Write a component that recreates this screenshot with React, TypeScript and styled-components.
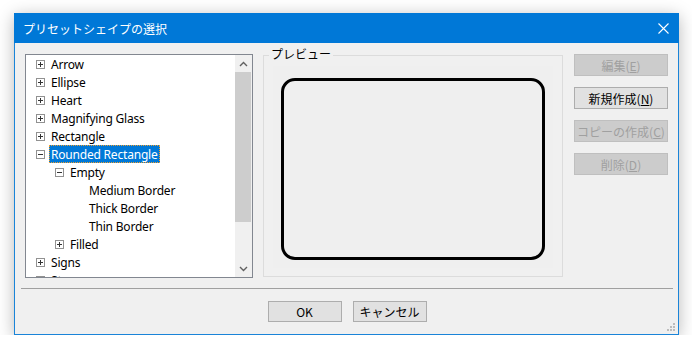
import styled, { createGlobalStyle } from "styled-components";

const GlobalStyle = createGlobalStyle`
	html, body {
		margin: 0;
		padding: 0;
		background: #ffffff;
	}
	body {
		font-family: "Noto Sans", "Noto Sans CJK JP", sans-serif;
	}
`;

const JP = `"Noto Sans CJK JP", "Noto Sans", sans-serif`;
const UI = `"Noto Sans", "Noto Sans CJK JP", sans-serif`;

const Window = styled.div`
	position: relative;
	margin: 13px 0 0 14px;
	width: 665px;
	height: 322px;
	box-sizing: border-box;
	border: 1px solid #1a84d8;
	background: #f0f0f0;
	box-shadow: 0 3px 16px rgba(0, 0, 0, 0.28);
	display: flex;
	flex-direction: column;
`;

const TitleBar = styled.div`
	height: 30px;
	margin: -1px -1px 0;
	background: #0078d7;
	display: flex;
	align-items: center;
	justify-content: space-between;
	padding: 0 0 0 9px;
	color: #ffffff;
	font-family: ${JP};
	font-size: 12px;
	flex-shrink: 0;
`;

const CloseBox = styled.div`
	width: 30px;
	height: 30px;
	display: flex;
	align-items: center;
	justify-content: center;
	margin-right: 1px;
`;

const Client = styled.div`
	flex: 1;
	display: flex;
	flex-direction: column;
`;

const MainRow = styled.div`
	display: flex;
	padding: 11px 0 0 10px;
`;

const Tree = styled.div`
	width: 228px;
	height: 224px;
	box-sizing: border-box;
	border: 1px solid #828790;
	background: #ffffff;
	display: flex;
	overflow: hidden;
`;

const TreeList = styled.div`
	flex: 1;
	overflow: hidden;
	font-family: ${UI};
	font-size: 12px;
	color: #000000;
`;

const Row = styled.div<{ $level: number }>`
	height: 18px;
	display: flex;
	align-items: center;
	padding-left: ${(p) => 10 + p.$level * 19}px;
	white-space: nowrap;
`;

const ExpSlot = styled.div`
	width: 9px;
	height: 9px;
	margin-right: 4px;
	flex-shrink: 0;
	display: flex;
`;

const Label = styled.span<{ $selected?: boolean }>`
	display: inline-block;
	height: 18px;
	line-height: 17px;
	padding: 1px 2px 0 2px;
	box-sizing: border-box;
	background: ${(p) => (p.$selected ? "#0078d7" : "transparent")};
	color: ${(p) => (p.$selected ? "#ffffff" : "#000000")};
	outline: ${(p) => (p.$selected ? "1px dotted #f0a030" : "none")};
	outline-offset: -1px;
	letter-spacing: -0.2px;
`;

const ScrollBar = styled.div`
	width: 17px;
	background: #f0f0f0;
	display: flex;
	flex-direction: column;
`;

const ScrollArrow = styled.div`
	height: 17px;
	display: flex;
	align-items: center;
	justify-content: center;
`;

const ScrollThumb = styled.div`
	height: 150px;
	margin: 0 1px 0 0;
	background: #cdcdcd;
`;

const ScrollTrack = styled.div`
	flex: 1;
`;

const Group = styled.div`
	position: relative;
	margin: 1px 0 0 10px;
	width: 300px;
	height: 222px;
	box-sizing: border-box;
	border: 1px solid #dcdcdc;
	padding: 10px 9px 8px 9px;
`;

const GroupLegend = styled.span`
	position: absolute;
	top: -10px;
	left: 5px;
	padding: 0 2px;
	background: #f0f0f0;
	font-family: ${JP};
	font-size: 12px;
	line-height: 16px;
	color: #000000;
`;

const Preview = styled.div`
	height: 100%;
	background: #efefef;
	display: flex;
	padding: 12px 8px 8px 8px;
	box-sizing: border-box;
`;

const Shape = styled.div`
	flex: 1;
	border: 3px solid #000000;
	border-radius: 14px;
`;

const SideButtons = styled.div`
	margin-left: 11px;
	display: flex;
	flex-direction: column;
	gap: 11px;
`;

const Button = styled.div<{ $disabled?: boolean; $w: number; $h: number }>`
	width: ${(p) => p.$w}px;
	height: ${(p) => p.$h}px;
	box-sizing: border-box;
	border: 1px solid ${(p) => (p.$disabled ? "#bfbfbf" : "#adadad")};
	background: ${(p) => (p.$disabled ? "#cccccc" : "#e1e1e1")};
	color: ${(p) => (p.$disabled ? "#a0a0a0" : "#000000")};
	font-family: ${JP};
	font-size: 12px;
	display: flex;
	align-items: center;
	justify-content: center;
	u {
		text-decoration: underline;
		text-underline-offset: 1px;
	}
`;

const Separator = styled.div`
	margin: 10px 5px 0 6px;
	height: 1px;
	background: #a0a0a0;
`;

const BottomRow = styled.div`
	margin-top: 12px;
	display: flex;
	justify-content: center;
	gap: 11px;
	padding-left: 1px;
`;

const Grip = styled.svg`
	position: absolute;
	right: 2px;
	bottom: 2px;
`;

type Item = { level: number; label: string; exp?: "plus" | "minus"; selected?: boolean };

const items: Item[] = [
	{ level: 0, label: "Arrow", exp: "plus" },
	{ level: 0, label: "Ellipse", exp: "plus" },
	{ level: 0, label: "Heart", exp: "plus" },
	{ level: 0, label: "Magnifying Glass", exp: "plus" },
	{ level: 0, label: "Rectangle", exp: "plus" },
	{ level: 0, label: "Rounded Rectangle", exp: "minus", selected: true },
	{ level: 1, label: "Empty", exp: "minus" },
	{ level: 2, label: "Medium Border" },
	{ level: 2, label: "Thick Border" },
	{ level: 2, label: "Thin Border" },
	{ level: 1, label: "Filled", exp: "plus" },
	{ level: 0, label: "Signs", exp: "plus" },
	{ level: 0, label: "Stars", exp: "plus" },
];

function Expander({ kind }: { kind: "plus" | "minus" }) {
	return (
		<svg width="9" height="9" viewBox="0 0 9 9">
			<rect x="0.5" y="0.5" width="8" height="8" fill="#ffffff" stroke="#919191" />
			<line x1="2" y1="4.5" x2="7" y2="4.5" stroke="#333333" />
			{kind === "plus" && <line x1="4.5" y1="2" x2="4.5" y2="7" stroke="#333333" />}
		</svg>
	);
}

export default function App() {
	return (
		<>
			<GlobalStyle />
			<Window>
				<TitleBar>
					<span>プリセットシェイプの選択</span>
					<CloseBox>
						<svg width="11" height="11" viewBox="0 0 11 11">
							<path d="M0.5 0.5 L10.5 10.5 M10.5 0.5 L0.5 10.5" stroke="#ffffff" strokeWidth="1.1" />
						</svg>
					</CloseBox>
				</TitleBar>
				<Client>
					<MainRow>
						<Tree>
							<TreeList>
								{items.map((it, i) => (
									<Row key={i} $level={it.level}>
										<ExpSlot>{it.exp && <Expander kind={it.exp} />}</ExpSlot>
										<Label $selected={it.selected}>{it.label}</Label>
									</Row>
								))}
							</TreeList>
							<ScrollBar>
								<ScrollArrow>
									<svg width="9" height="6" viewBox="0 0 9 6">
										<path d="M1 5 L4.5 1.5 L8 5" fill="none" stroke="#606060" strokeWidth="1.4" />
									</svg>
								</ScrollArrow>
								<ScrollThumb />
								<ScrollTrack />
								<ScrollArrow>
									<svg width="9" height="6" viewBox="0 0 9 6">
										<path d="M1 1 L4.5 4.5 L8 1" fill="none" stroke="#606060" strokeWidth="1.4" />
									</svg>
								</ScrollArrow>
							</ScrollBar>
						</Tree>
						<Group>
							<GroupLegend>プレビュー</GroupLegend>
							<Preview>
								<Shape />
							</Preview>
						</Group>
						<SideButtons>
							<Button $disabled $w={94} $h={22}>
								編集(<u>E</u>)
							</Button>
							<Button $w={94} $h={22}>
								新規作成(<u>N</u>)
							</Button>
							<Button $disabled $w={94} $h={22}>
								コピーの作成(<u>C</u>)
							</Button>
							<Button $disabled $w={94} $h={22}>
								削除(<u>D</u>)
							</Button>
						</SideButtons>
					</MainRow>
					<Separator />
					<BottomRow>
						<Button $w={74} $h={21}>OK</Button>
						<Button $w={74} $h={21}>キャンセル</Button>
					</BottomRow>
				</Client>
				<Grip width="10" height="10" viewBox="0 0 10 10">
					<rect x="7" y="1" width="2" height="2" fill="#bcbcbc" />
					<rect x="4" y="4" width="2" height="2" fill="#bcbcbc" />
					<rect x="7" y="4" width="2" height="2" fill="#bcbcbc" />
					<rect x="1" y="7" width="2" height="2" fill="#bcbcbc" />
					<rect x="4" y="7" width="2" height="2" fill="#bcbcbc" />
					<rect x="7" y="7" width="2" height="2" fill="#bcbcbc" />
				</Grip>
			</Window>
		</>
	);
}
